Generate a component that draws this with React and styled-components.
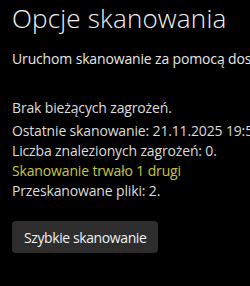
import React from 'react';
import styled, { createGlobalStyle } from 'styled-components';

const Global = createGlobalStyle`
    html, body {
        margin: 0;
        padding: 0;
        background: #000;
    }
    body {
        font-family: "Open Sans", "Noto Sans", "Liberation Sans", sans-serif;
        color: #e6e6e6;
    }
`

const Page = styled.div`
    width: 250px;
    height: 286px;
    overflow: hidden;
    background: #000;
    padding: 0 0 0 12px;
    box-sizing: border-box;
`

const Title = styled.h1`
    margin: 0;
    font-size: 26px;
    font-weight: 300;
    line-height: 36px;
    color: #f2f2f2;
    white-space: nowrap;
    letter-spacing: 0.2px;
`

const Subtitle = styled.p`
    margin: 13px 0 0;
    font-size: 14px;
    line-height: 20px;
    color: #e6e6e6;
    white-space: nowrap;
    letter-spacing: -0.15px;
`

const Status = styled.div`
    margin-top: 29px;
    display: flex;
    flex-direction: column;
`

const Line = styled.div`
    font-size: 14px;
    line-height: 20px;
    white-space: nowrap;
    letter-spacing: -0.15px;
    color: ${p => (p.$warn ? '#c9c540' : '#dcdcdc')};
    margin-bottom: ${p => (p.$lead ? '3px' : '0')};
`

const Button = styled.button`
    margin-top: 20px;
    height: 32px;
    padding: 0 12px;
    border: none;
    border-radius: 4px;
    background: #2d2d2d;
    color: #f0f0f0;
    font-family: inherit;
    font-size: 14px;
    letter-spacing: -0.4px;
    cursor: pointer;
`

export default function App() {
    return (
        <Page>
            <Global />
            <Title>Opcje skanowania</Title>
            <Subtitle>Uruchom skanowanie za pomocą dostępnych opcji.</Subtitle>
            <Status>
                <Line $lead>Brak bieżących zagrożeń.</Line>
                <Line>Ostatnie skanowanie: 21.11.2025 19:54</Line>
                <Line>Liczba znalezionych zagrożeń: 0.</Line>
                <Line $warn>Skanowanie trwało 1 drugi</Line>
                <Line>Przeskanowane pliki: 2.</Line>
            </Status>
            <Button>Szybkie skanowanie</Button>
        </Page>
    );
}
